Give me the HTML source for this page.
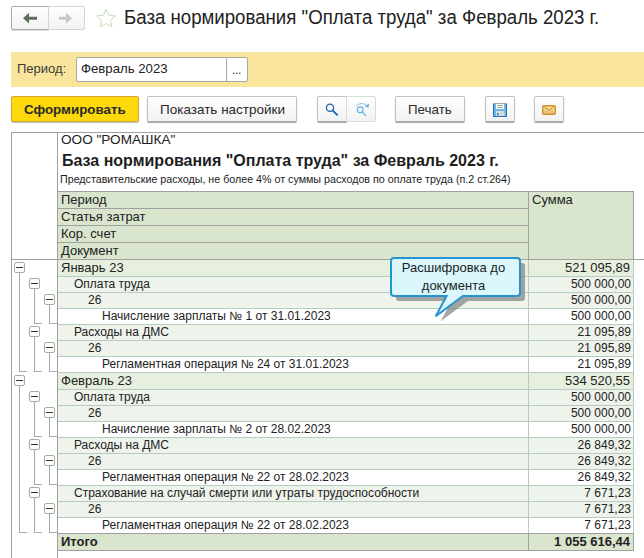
<!DOCTYPE html>
<html><head><meta charset="utf-8">
<style>
*{box-sizing:border-box;margin:0;padding:0}
html,body{width:644px;height:558px;overflow:hidden;background:#fff;font-family:"Liberation Sans",sans-serif;color:#333}
.a{position:absolute}
.t{position:absolute;white-space:nowrap;line-height:16px}
.btn{position:absolute;border:1px solid #c2c2c2;border-bottom-color:#a8a8a8;border-radius:2px;background:linear-gradient(#fff,#f2f2f2);box-shadow:0 1px 1px rgba(0,0,0,.35)}
.hl{position:absolute;height:1px}
.vl{position:absolute;width:1px}
</style></head><body>
<!-- nav -->
<div class="btn" style="left:11px;top:6px;width:38px;height:24px;border-radius:2px 0 0 2px;border-color:#a4aca4;box-shadow:0 1px 0 rgba(0,0,0,.12)"></div>
<div class="btn" style="left:48px;top:6px;width:37px;height:24px;border-radius:0 2px 2px 0;box-shadow:none;border-color:#cfd8cf"></div>
<svg class="a" style="left:0;top:0" width="130" height="40">
  <path d="M23 18.2 L29 12.8 V16.7 H37 V19.7 H29 V23.6 Z" fill="#5e6e5e"/>
  <path d="M72 18.2 L66 12.8 V16.7 H59 V19.7 H66 V23.6 Z" fill="#c6cac6"/>
  <path d="M106.00 9.05 L108.70 15.23 L115.42 15.89 L110.37 20.37 L111.82 26.96 L106.00 23.55 L100.18 26.96 L101.63 20.37 L96.58 15.89 L103.30 15.23 Z" fill="none" stroke="#c8dcc0" stroke-width="1"/>
</svg>
<div class="t" style="left:124px;top:7px;font-size:18.65px;line-height:22px;color:#222;transform:scaleY(1.08);transform-origin:0 17px">База нормирования "Оплата труда" за Февраль 2023 г.</div>

<!-- yellow band -->
<div class="a" style="left:11px;top:52px;width:633px;height:35px;background:#fae59d"></div>
<div class="t" style="left:17px;top:61px;font-size:13px;color:#3a3a3a">Период:</div>
<div class="a" style="left:76px;top:57px;width:172px;height:25px;background:#fff;border:1px solid #a8a8a8;border-radius:2px"></div>
<div class="vl" style="left:226px;top:58px;height:23px;background:#a8a8a8"></div>
<div class="t" style="left:81px;top:61px;font-size:13.2px;color:#222">Февраль 2023</div>
<div class="t" style="left:232px;top:62px;font-size:12px;color:#333;letter-spacing:-0.3px">...</div>

<!-- toolbar -->
<div class="a" style="left:11px;top:96px;width:128px;height:26px;background:#fdd80a;border:1px solid #d2a83a;border-radius:2px;box-shadow:0 1px 1px rgba(0,0,0,.25)"></div>
<div class="t" style="left:24px;top:101.6px;font-size:13.35px;font-weight:bold;color:#2a2a2a">Сформировать</div>
<div class="btn" style="left:147px;top:96px;width:150px;height:26px"></div>
<div class="t" style="left:160px;top:101.6px;font-size:13.5px;color:#2a2a2a">Показать настройки</div>
<div class="btn" style="left:317px;top:96px;width:30px;height:26px;border-radius:2px 0 0 2px"></div>
<div class="btn" style="left:346px;top:96px;width:30px;height:26px;border-radius:0 2px 2px 0;box-shadow:none;border-color:#d6dcd6"></div>
<div class="btn" style="left:395px;top:96px;width:70px;height:26px"></div>
<div class="t" style="left:408px;top:101.6px;font-size:13.35px;color:#2a2a2a">Печать</div>
<div class="btn" style="left:485px;top:96px;width:30px;height:26px"></div>
<div class="btn" style="left:534px;top:96px;width:30px;height:26px"></div>
<svg class="a" style="left:300px;top:90px" width="280" height="40">
  <!-- search -->
  <circle cx="30" cy="17.8" r="3.6" fill="none" stroke="#1f66ad" stroke-width="1.3"/>
  <path d="M32.8 20.6 L37.2 24.9" stroke="#1f66ad" stroke-width="1.9" stroke-linecap="round"/>
  <!-- search next -->
  <circle cx="60.2" cy="19.8" r="2.9" fill="none" stroke="#5aaee0" stroke-width="1.1"/>
  <path d="M62.2 21.9 L65.6 25.3" stroke="#5aaee0" stroke-width="1.2" stroke-linecap="round"/>
  <path d="M56 16.3 Q61 11.2 66.5 15.2" fill="none" stroke="#8cc8e8" stroke-width="1.0"/>
  <path d="M69 13.5 L68.6 17.8 L64.8 16.6 Z" fill="#5aaee0"/>
  <!-- floppy -->
  <rect x="193.5" y="13.5" width="13" height="13" fill="#6cb7ea" stroke="#2a6cb8"/>
  <rect x="193" y="13" width="14" height="1" fill="#9aa8b0"/>
  <rect x="196" y="14" width="8" height="5" fill="#fff"/>
  <rect x="197" y="15" width="6" height="1" fill="#8fb8a0"/>
  <rect x="197" y="17" width="6" height="1" fill="#8fb8a0"/>
  <rect x="196" y="21" width="8.5" height="5" fill="#d6dcd8"/>
  <rect x="197" y="23" width="1.6" height="2.3" fill="#2a7ec8"/>
  <!-- mail -->
  <defs><linearGradient id="mg" x1="0" y1="0" x2="0" y2="1"><stop offset="0" stop-color="#fbe6a0"/><stop offset="1" stop-color="#f0bd78"/></linearGradient></defs>
  <rect x="242.7" y="15.7" width="12.6" height="8.6" rx="1.2" fill="url(#mg)" stroke="#c8922a" stroke-width="1.4"/>
  <path d="M243.5 16.3 L249 20.4 L254.5 16.3" fill="none" stroke="#c8922a" stroke-width="1"/>
  <path d="M244 23.5 L247 20.5 M254 23.5 L251 20.5" fill="none" stroke="#d8a656" stroke-width="0.8"/>
</svg>

<!-- report field -->
<div class="hl" style="left:11px;top:132px;width:633px;background:#a0a0a0"></div>
<div class="vl" style="left:11px;top:132px;height:426px;background:#a0a0a0"></div>
<div class="vl" style="left:57px;top:132px;height:426px;background:#a0a0a0;z-index:3"></div>
<div class="t" style="left:61px;top:132px;font-size:13.6px;color:#222">ООО "РОМАШКА"</div>
<div class="t" style="left:62px;top:152px;font-size:16px;font-weight:bold;line-height:18px;color:#1e1e1e">База нормирования "Оплата труда" за Февраль 2023 г.</div>
<div class="t" style="left:60px;top:172px;font-size:10.7px;line-height:14px;color:#222">Представительские расходы, не более 4% от суммы расходов по оплате труда (п.2 ст.264)</div>

<!--callout-->
<svg class="a" style="left:380px;top:250px;z-index:5" width="160" height="80">
  <path d="M14 8 H137 Q140 8 140 11 V43 Q140 46 137 46 H82.9 L55.7 66.3 L66.6 46 H14 Q11 46 11 43 V11 Q11 8 14 8 Z" fill="#808080" opacity="0.7" transform="translate(5,5)"/>
  <path d="M14 8 H137 Q140 8 140 11 V43 Q140 46 137 46 H82.9 L55.7 66.3 L66.6 46 H14 Q11 46 11 43 V11 Q11 8 14 8 Z" fill="#d9f7fd" stroke="#2793cf" stroke-width="2"/>
</svg>
<div class="t" style="left:388px;top:259px;width:131px;text-align:center;font-size:13px;line-height:18px;color:#222;z-index:6">Расшифровка до<br>документа</div>
<div id="grid">
<div class="a" style="left:57px;top:191px;width:577px;height:69px;background:#d9e5cd"></div>
<div class="hl" style="left:57px;top:191px;width:577px;background:#a0a0a0"></div>
<div class="hl" style="left:57px;top:259px;width:577px;background:#a0a0a0"></div>
<div class="hl" style="left:57px;top:208px;width:471px;background:#a0a0a0"></div>
<div class="hl" style="left:57px;top:225px;width:471px;background:#a0a0a0"></div>
<div class="hl" style="left:57px;top:242px;width:471px;background:#a0a0a0"></div>
<div class="vl" style="left:528px;top:191px;height:68px;background:#a0a0a0"></div>
<div class="vl" style="left:633px;top:191px;height:68px;background:#a0a0a0"></div>
<div class="hl" style="left:11px;top:259px;width:46px;background:#a0a0a0"></div>
<div class="hl" style="left:633px;top:259px;width:11px;background:#a0a0a0"></div>
<div class="t" style="left:61px;top:192px;font-size:13px;color:#222">Период</div>
<div class="t" style="left:61px;top:209px;font-size:13px;color:#222">Статья затрат</div>
<div class="t" style="left:61px;top:226px;font-size:13px;color:#222">Кор. счет</div>
<div class="t" style="left:61px;top:243px;font-size:13px;color:#222">Документ</div>
<div class="t" style="left:532px;top:192px;font-size:13px;color:#222">Сумма</div>
<div class="a" style="left:58px;top:260px;width:575px;height:16px;background:#e7f0df"></div>
<div class="hl" style="left:58px;top:276px;width:576px;background:#b5cdbf"></div>
<div class="t" style="left:61px;top:260px;height:16px;line-height:16px;font-size:13px;color:#222">Январь 23</div>
<div class="t" style="right:14px;top:260px;height:16px;line-height:16px;font-size:13px;color:#222">521 095,89</div>
<div class="a" style="left:58px;top:277px;width:575px;height:15px;background:#eef3eb"></div>
<div class="hl" style="left:58px;top:292px;width:576px;background:#b5cdbf"></div>
<div class="t" style="left:74px;top:277px;height:15px;line-height:15px;font-size:12px;color:#222">Оплата труда</div>
<div class="t" style="right:13px;top:277px;height:15px;line-height:15px;font-size:12px;color:#222">500 000,00</div>
<div class="a" style="left:58px;top:293px;width:575px;height:15px;background:#eef3eb"></div>
<div class="hl" style="left:58px;top:308px;width:576px;background:#b5cdbf"></div>
<div class="t" style="left:88px;top:293px;height:15px;line-height:15px;font-size:12px;color:#222">26</div>
<div class="t" style="right:13px;top:293px;height:15px;line-height:15px;font-size:12px;color:#222">500 000,00</div>
<div class="a" style="left:58px;top:309px;width:575px;height:15px;background:#ffffff"></div>
<div class="hl" style="left:58px;top:324px;width:576px;background:#b5cdbf"></div>
<div class="t" style="left:102px;top:309px;height:15px;line-height:15px;font-size:12px;color:#222">Начисление зарплаты № 1 от 31.01.2023</div>
<div class="t" style="right:13px;top:309px;height:15px;line-height:15px;font-size:12px;color:#222">500 000,00</div>
<div class="a" style="left:58px;top:325px;width:575px;height:15px;background:#eef3eb"></div>
<div class="hl" style="left:58px;top:340px;width:576px;background:#b5cdbf"></div>
<div class="t" style="left:74px;top:325px;height:15px;line-height:15px;font-size:12px;color:#222">Расходы на ДМС</div>
<div class="t" style="right:13px;top:325px;height:15px;line-height:15px;font-size:12px;color:#222">21 095,89</div>
<div class="a" style="left:58px;top:341px;width:575px;height:15px;background:#eef3eb"></div>
<div class="hl" style="left:58px;top:356px;width:576px;background:#b5cdbf"></div>
<div class="t" style="left:88px;top:341px;height:15px;line-height:15px;font-size:12px;color:#222">26</div>
<div class="t" style="right:13px;top:341px;height:15px;line-height:15px;font-size:12px;color:#222">21 095,89</div>
<div class="a" style="left:58px;top:357px;width:575px;height:15px;background:#ffffff"></div>
<div class="hl" style="left:58px;top:372px;width:576px;background:#b5cdbf"></div>
<div class="t" style="left:102px;top:357px;height:15px;line-height:15px;font-size:12px;color:#222">Регламентная операция № 24 от 31.01.2023</div>
<div class="t" style="right:13px;top:357px;height:15px;line-height:15px;font-size:12px;color:#222">21 095,89</div>
<div class="a" style="left:58px;top:373px;width:575px;height:16px;background:#e7f0df"></div>
<div class="hl" style="left:58px;top:389px;width:576px;background:#b5cdbf"></div>
<div class="t" style="left:61px;top:373px;height:16px;line-height:16px;font-size:13px;color:#222">Февраль 23</div>
<div class="t" style="right:14px;top:373px;height:16px;line-height:16px;font-size:13px;color:#222">534 520,55</div>
<div class="a" style="left:58px;top:390px;width:575px;height:15px;background:#eef3eb"></div>
<div class="hl" style="left:58px;top:405px;width:576px;background:#b5cdbf"></div>
<div class="t" style="left:74px;top:390px;height:15px;line-height:15px;font-size:12px;color:#222">Оплата труда</div>
<div class="t" style="right:13px;top:390px;height:15px;line-height:15px;font-size:12px;color:#222">500 000,00</div>
<div class="a" style="left:58px;top:406px;width:575px;height:15px;background:#eef3eb"></div>
<div class="hl" style="left:58px;top:421px;width:576px;background:#b5cdbf"></div>
<div class="t" style="left:88px;top:406px;height:15px;line-height:15px;font-size:12px;color:#222">26</div>
<div class="t" style="right:13px;top:406px;height:15px;line-height:15px;font-size:12px;color:#222">500 000,00</div>
<div class="a" style="left:58px;top:422px;width:575px;height:15px;background:#ffffff"></div>
<div class="hl" style="left:58px;top:437px;width:576px;background:#b5cdbf"></div>
<div class="t" style="left:102px;top:422px;height:15px;line-height:15px;font-size:12px;color:#222">Начисление зарплаты № 2 от 28.02.2023</div>
<div class="t" style="right:13px;top:422px;height:15px;line-height:15px;font-size:12px;color:#222">500 000,00</div>
<div class="a" style="left:58px;top:438px;width:575px;height:15px;background:#eef3eb"></div>
<div class="hl" style="left:58px;top:453px;width:576px;background:#b5cdbf"></div>
<div class="t" style="left:74px;top:438px;height:15px;line-height:15px;font-size:12px;color:#222">Расходы на ДМС</div>
<div class="t" style="right:13px;top:438px;height:15px;line-height:15px;font-size:12px;color:#222">26 849,32</div>
<div class="a" style="left:58px;top:454px;width:575px;height:15px;background:#eef3eb"></div>
<div class="hl" style="left:58px;top:469px;width:576px;background:#b5cdbf"></div>
<div class="t" style="left:88px;top:454px;height:15px;line-height:15px;font-size:12px;color:#222">26</div>
<div class="t" style="right:13px;top:454px;height:15px;line-height:15px;font-size:12px;color:#222">26 849,32</div>
<div class="a" style="left:58px;top:470px;width:575px;height:15px;background:#ffffff"></div>
<div class="hl" style="left:58px;top:485px;width:576px;background:#b5cdbf"></div>
<div class="t" style="left:102px;top:470px;height:15px;line-height:15px;font-size:12px;color:#222">Регламентная операция № 22 от 28.02.2023</div>
<div class="t" style="right:13px;top:470px;height:15px;line-height:15px;font-size:12px;color:#222">26 849,32</div>
<div class="a" style="left:58px;top:486px;width:575px;height:15px;background:#eef3eb"></div>
<div class="hl" style="left:58px;top:501px;width:576px;background:#b5cdbf"></div>
<div class="t" style="left:74px;top:486px;height:15px;line-height:15px;font-size:12px;color:#222">Страхование на случай смерти или утраты трудоспособности</div>
<div class="t" style="right:13px;top:486px;height:15px;line-height:15px;font-size:12px;color:#222">7 671,23</div>
<div class="a" style="left:58px;top:502px;width:575px;height:15px;background:#eef3eb"></div>
<div class="hl" style="left:58px;top:517px;width:576px;background:#b5cdbf"></div>
<div class="t" style="left:88px;top:502px;height:15px;line-height:15px;font-size:12px;color:#222">26</div>
<div class="t" style="right:13px;top:502px;height:15px;line-height:15px;font-size:12px;color:#222">7 671,23</div>
<div class="a" style="left:58px;top:518px;width:575px;height:15px;background:#ffffff"></div>
<div class="hl" style="left:58px;top:533px;width:576px;background:#b5cdbf"></div>
<div class="t" style="left:102px;top:518px;height:15px;line-height:15px;font-size:12px;color:#222">Регламентная операция № 22 от 28.02.2023</div>
<div class="t" style="right:13px;top:518px;height:15px;line-height:15px;font-size:12px;color:#222">7 671,23</div>
<div class="vl" style="left:528px;top:260px;height:273px;background:#b5cdbf"></div>
<div class="vl" style="left:633px;top:260px;height:273px;background:#b5cdbf"></div>
<div class="a" style="left:57px;top:533px;width:577px;height:18px;background:#d9e5cd;border-top:1px solid #a0a0a0;border-bottom:1px solid #a0a0a0"></div>
<div class="vl" style="left:528px;top:533px;height:17px;background:#a0a0a0"></div>
<div class="vl" style="left:633px;top:533px;height:17px;background:#a0a0a0"></div>
<div class="t" style="left:61px;top:534px;height:16px;line-height:16px;font-size:13px;font-weight:bold;color:#222">Итого</div>
<div class="t" style="right:14px;top:534px;height:16px;line-height:16px;font-size:13px;font-weight:bold;color:#222">1 055 616,44</div>
<div class="a" style="left:14px;top:262px;width:11px;height:11px;border:1px solid #a3ada3;border-radius:2px;background:#fff"></div><div class="hl" style="left:16px;top:267px;width:7px;background:#333"></div>
<div class="vl" style="left:19px;top:273px;height:99px;background:#a8a8a8"></div>
<div class="hl" style="left:19px;top:371px;width:8px;background:#a8a8a8"></div>
<div class="a" style="left:29px;top:278px;width:11px;height:11px;border:1px solid #a3ada3;border-radius:2px;background:#fff"></div><div class="hl" style="left:31px;top:283px;width:7px;background:#333"></div>
<div class="vl" style="left:34px;top:289px;height:35px;background:#a8a8a8"></div>
<div class="hl" style="left:34px;top:323px;width:8px;background:#a8a8a8"></div>
<div class="a" style="left:44px;top:294px;width:11px;height:11px;border:1px solid #a3ada3;border-radius:2px;background:#fff"></div><div class="hl" style="left:46px;top:299px;width:7px;background:#333"></div>
<div class="vl" style="left:49px;top:305px;height:19px;background:#a8a8a8"></div>
<div class="hl" style="left:49px;top:323px;width:8px;background:#a8a8a8"></div>
<div class="a" style="left:29px;top:326px;width:11px;height:11px;border:1px solid #a3ada3;border-radius:2px;background:#fff"></div><div class="hl" style="left:31px;top:331px;width:7px;background:#333"></div>
<div class="vl" style="left:34px;top:337px;height:35px;background:#a8a8a8"></div>
<div class="hl" style="left:34px;top:371px;width:8px;background:#a8a8a8"></div>
<div class="a" style="left:44px;top:342px;width:11px;height:11px;border:1px solid #a3ada3;border-radius:2px;background:#fff"></div><div class="hl" style="left:46px;top:347px;width:7px;background:#333"></div>
<div class="vl" style="left:49px;top:353px;height:19px;background:#a8a8a8"></div>
<div class="hl" style="left:49px;top:371px;width:8px;background:#a8a8a8"></div>
<div class="a" style="left:14px;top:375px;width:11px;height:11px;border:1px solid #a3ada3;border-radius:2px;background:#fff"></div><div class="hl" style="left:16px;top:380px;width:7px;background:#333"></div>
<div class="vl" style="left:19px;top:386px;height:147px;background:#a8a8a8"></div>
<div class="hl" style="left:19px;top:532px;width:8px;background:#a8a8a8"></div>
<div class="a" style="left:29px;top:391px;width:11px;height:11px;border:1px solid #a3ada3;border-radius:2px;background:#fff"></div><div class="hl" style="left:31px;top:396px;width:7px;background:#333"></div>
<div class="vl" style="left:34px;top:402px;height:35px;background:#a8a8a8"></div>
<div class="hl" style="left:34px;top:436px;width:8px;background:#a8a8a8"></div>
<div class="a" style="left:44px;top:407px;width:11px;height:11px;border:1px solid #a3ada3;border-radius:2px;background:#fff"></div><div class="hl" style="left:46px;top:412px;width:7px;background:#333"></div>
<div class="vl" style="left:49px;top:418px;height:19px;background:#a8a8a8"></div>
<div class="hl" style="left:49px;top:436px;width:8px;background:#a8a8a8"></div>
<div class="a" style="left:29px;top:439px;width:11px;height:11px;border:1px solid #a3ada3;border-radius:2px;background:#fff"></div><div class="hl" style="left:31px;top:444px;width:7px;background:#333"></div>
<div class="vl" style="left:34px;top:450px;height:35px;background:#a8a8a8"></div>
<div class="hl" style="left:34px;top:484px;width:8px;background:#a8a8a8"></div>
<div class="a" style="left:44px;top:455px;width:11px;height:11px;border:1px solid #a3ada3;border-radius:2px;background:#fff"></div><div class="hl" style="left:46px;top:460px;width:7px;background:#333"></div>
<div class="vl" style="left:49px;top:466px;height:19px;background:#a8a8a8"></div>
<div class="hl" style="left:49px;top:484px;width:8px;background:#a8a8a8"></div>
<div class="a" style="left:29px;top:487px;width:11px;height:11px;border:1px solid #a3ada3;border-radius:2px;background:#fff"></div><div class="hl" style="left:31px;top:492px;width:7px;background:#333"></div>
<div class="vl" style="left:34px;top:498px;height:35px;background:#a8a8a8"></div>
<div class="hl" style="left:34px;top:532px;width:8px;background:#a8a8a8"></div>
<div class="a" style="left:44px;top:503px;width:11px;height:11px;border:1px solid #a3ada3;border-radius:2px;background:#fff"></div><div class="hl" style="left:46px;top:508px;width:7px;background:#333"></div>
<div class="vl" style="left:49px;top:514px;height:19px;background:#a8a8a8"></div>
<div class="hl" style="left:49px;top:532px;width:8px;background:#a8a8a8"></div>
</div><!--/grid-->
</body></html>
